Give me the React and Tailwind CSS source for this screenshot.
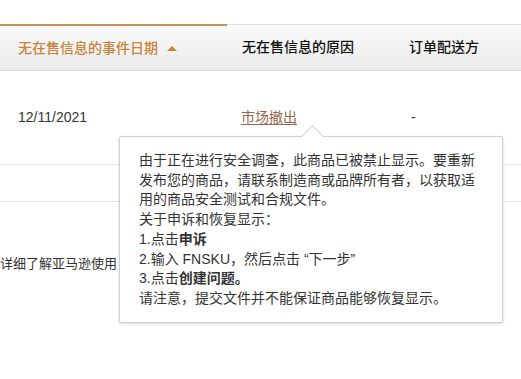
import React from 'react';

const font = { fontFamily: '"Liberation Sans", "Noto Sans CJK SC", sans-serif' };

const lines = [
  <>由于正在进行安全调查，此商品已被禁止显示。要重新</>,
  <>发布您的商品，请联系制造商或品牌所有者，以获取适</>,
  <>用的商品安全测试和合规文件。</>,
  <>关于申诉和恢复显示：</>,
  <>1.点击<span className="font-bold">申诉</span></>,
  <>2.输入 FNSKU，然后点击 “下一步”</>,
  <>3.点击<span className="font-bold">创建问题。</span></>,
  <>请注意，提交文件并不能保证商品能够恢复显示。</>,
];

const App = () => {
  return (
    <div className="relative w-[521px] h-[379px] overflow-hidden bg-white text-[#333]" style={font}>
      <div className="h-[24px]" />

      {/* table header */}
      <div className="flex h-[47px] bg-gradient-to-b from-[#f9f9f9] to-[#ececec] border-b border-[#dcdcdc] text-[14px]">
        <div className="w-[227px] flex items-center pl-[18px] border-t-2 border-[#c4935e] text-[#c8843a] font-medium">
          无在售信息的事件日期
          <span className="ml-[9px] w-0 h-0 border-l-[5px] border-r-[5px] border-b-[5px] border-l-transparent border-r-transparent border-b-[#c8843a]" />
        </div>
        <div className="w-[167px] flex items-center pl-[15px] border-t border-[#e2e2e2] text-[#111] font-medium">
          无在售信息的原因
        </div>
        <div className="flex-1 flex items-center pl-[15px] border-t border-[#e2e2e2] text-[#111] font-medium">
          订单配送方
        </div>
      </div>

      {/* row */}
      <div className="flex h-[94px] border-b border-[#e3e3e3] text-[14px]">
        <div className="w-[227px] flex items-center pl-[18px]">12/11/2021</div>
        <div className="w-[167px] flex items-center pl-[14px]">
          <span className="text-[#94674a] underline underline-offset-2">市场撤出</span>
        </div>
        <div className="flex-1 flex items-center pl-[17px]">-</div>
      </div>
      <div className="h-[37px] border-b border-[#e3e3e3]" />

      <div className="pt-[52px] text-[13px] leading-[20px] whitespace-nowrap">详细了解亚马逊使用</div>

      {/* popover */}
      <div className="absolute left-[119px] top-[136px] w-[384px] h-[187px] bg-white border border-[#d0d0d0] rounded-[2px] shadow-[0_1px_3px_rgba(0,0,0,0.15)] pl-[19px] pt-[14px] text-[14px] leading-[19.7px] text-[#333]">
        <div className="absolute -top-[9px] left-[184px] w-[17px] h-[17px] bg-white border-l border-t border-[#d0d0d0] rotate-45 origin-center translate-y-[0.5px]" />
        <div className="relative">
          {lines.map((l, i) => (
            <div key={i} className="whitespace-nowrap">{l}</div>
          ))}
        </div>
      </div>
    </div>
  );
};

export default App;
